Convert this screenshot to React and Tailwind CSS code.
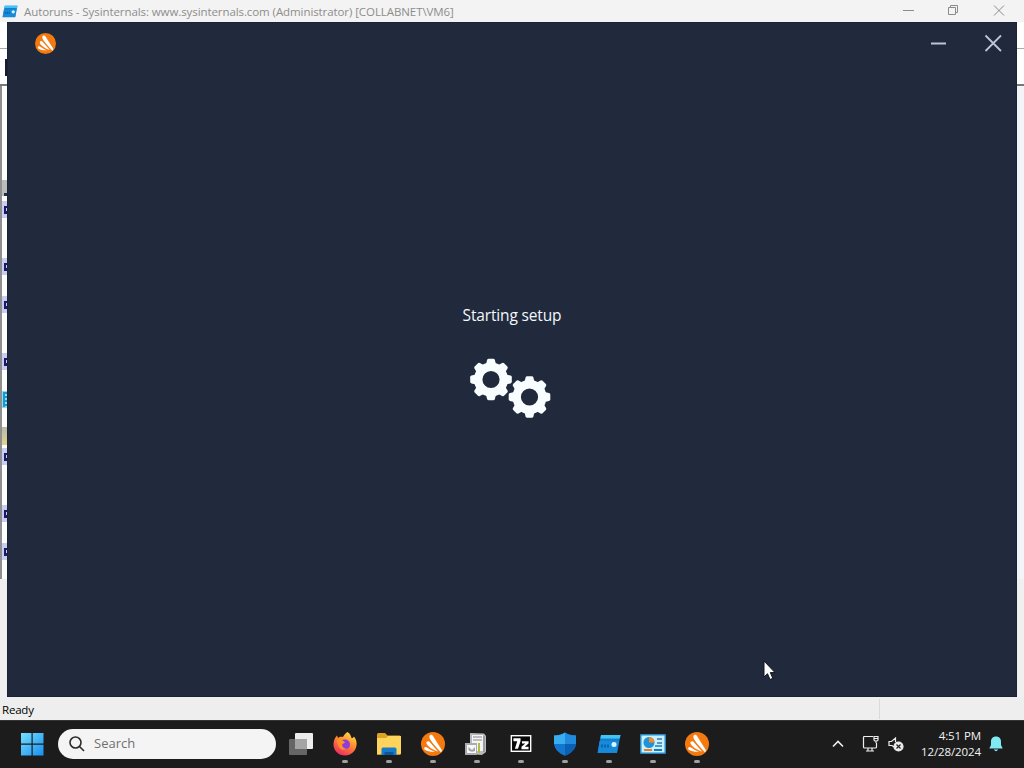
import React from "react";

const ui = "font-['Open_Sans','Noto_Sans',sans-serif]";

function AvastLogo({ className }) {
  return (
    <svg viewBox="0 0 24 24" className={className}>
      <circle cx="12" cy="12" r="12" fill="#f47a10" />
      <path d="M8.400 4.400C8.600 2.600 11 2.200 12 3.900L20.500 17.500C21.200 18.800 20.800 20 19.700 20.100C15.500 15.500 10 9.500 8.700 6.500C8.400 5.700 8.300 5.200 8.400 4.400Z" fill="#fff" />
      <path d="M5.900 9.700C6.800 8.700 8.100 9.100 8.900 10.300L17 19.500C12.500 18 7.500 15 5.900 12.200C5.300 11.200 5.300 10.400 5.900 9.700Z" fill="#fff" />
      <path d="M3.300 15.900C3.700 14.900 5 14.900 6 15.600C8.500 17.400 11 18.800 14 19.700C10.500 20.100 6.500 19.300 4.300 18C3.400 17.400 3 16.800 3.300 15.900Z" fill="#fff" />
    </svg>
  );
}

function AutorunsIcon({ className }) {
  return (
    <svg viewBox="0 0 24 20" className={className}>
      <path d="M4 1h19.500L20 19H0.500Z" fill="#147fce" />
      <path d="M4 1h19.500l-.8 3.500H3.300Z" fill="#40c4f5" />
      <path d="M2.600 7h19.300l-2 11.500H.8Z" fill="#178bd9" />
      <path d="M4 12h8" stroke="#0867b4" strokeWidth="3" strokeDasharray="2 1" />
      <circle cx="17" cy="10.500" r="2.500" fill="#d8f6ff" />
    </svg>
  );
}

function Gear({ x, y }) {
  return (
    <g transform={`translate(${x} ${y})`}>
      <g fill="#f8fdff">
        {[0, 45, 90, 135, 180, 225, 270, 315].map((a) => (
          <path key={a} transform={`rotate(${a})`} d="M-5.300-14L-3.900-19.500Q-3.500-20.800-2.300-20.800H2.300Q3.500-20.800 3.900-19.500L5.300-14Z" />
        ))}
      </g>
      <circle r="12.800" fill="none" stroke="#f8fdff" strokeWidth="8.400" />
    </g>
  );
}

function Firefox() {
  return (
    <svg viewBox="0 0 24 24" className="size-6">
      <defs>
        <linearGradient id="fox" x1=".8" y1="0" x2=".25" y2="1">
          <stop stopColor="#ffe24a" /><stop offset=".45" stopColor="#ff8b2c" /><stop offset="1" stopColor="#ee2568" />
        </linearGradient>
      </defs>
      <path d="M14.500 0C17 1.500 18 4 18.500 6C20 6.200 20.500 5.500 21 4.500C23 7 24 10 23.500 13C23 19 18 23.500 12 23.500C5.500 23.500.5 18.700.5 12.500C.5 9 1.500 6 4 3.500L5 6C6.500 4.500 8.500 4.500 10 5C11 3 12.500 1 14.500 0Z" fill="url(#fox)" />
      <circle cx="12" cy="12.500" r="5" fill="#8c3ddb" />
      <path d="M4 8.500C7 6.500 9 8 11 9.500C13 10.500 11 11.500 9.300 12C8.800 15 11 17 14 16.500C10 19.500 5 17 4 8.500Z" fill="#ff9426" />
    </svg>
  );
}

function Explorer() {
  return (
    <svg viewBox="0 0 26 24" className="h-6 w-[26px]">
      <path d="M1 2.500Q1 1 2.500 1H9L11.500 3.500H23.500Q25 3.500 25 5V21Q25 22.500 23.500 22.500H1Z" fill="#dfa323" />
      <path d="M1 6H10L12 4H25V21Q25 22.500 23.500 22.500H1Z" fill="#ffd45c" />
      <path d="M5.500 23V17Q5.500 15.500 7 15.500H19Q20.500 15.500 20.500 17V23Z" fill="#167cca" />
      <path d="M8.500 23V20H17.500V23Z" fill="#0a579f" />
    </svg>
  );
}

function Tool() {
  return (
    <svg viewBox="0 0 24 24" className="mr-0.5 size-6">
      <path d="M6 1L20 1.500L22 4V20L18 23L6 22Z" fill="#b9b9be" />
      <path d="M8 3H19V19H8Z" fill="#f4f4f4" />
      <path d="M9 5H18M9 8H18M20 4V20" stroke="#888890" strokeWidth="1.200" />
      <path d="M14 11H16V21H14Z" fill="#aebc42" />
      <rect x="1" y="11" width="12" height="12" fill="#aaaab0" />
      <rect x="3" y="13" width="9" height="8" fill="#f8f8f8" />
      <path d="M4.500 15V18Q7 21 11 19V15L8 18Z" fill="#a0a3aa" />
    </svg>
  );
}

function SevenZip() {
  return (
    <svg viewBox="0 0 22 18" className="h-[17px] w-[22px]">
      <rect width="22" height="18" fill="#fff" />
      <rect x="1.500" y="1.500" width="19" height="15" fill="#080808" />
      <path d="M3 3.500H10.500V6.500L7.800 14.500H4.500L7 6.500H3Z" fill="#fff" />
      <path d="M12 6.500H19V9L15 12.500H19V15H11.500V12.500L15.500 9H12Z" fill="#fff" />
    </svg>
  );
}

function Shield() {
  return (
    <svg viewBox="0 0 24 24" className="size-6">
      <path d="M12 .5Q16 3.500 23 3.500V11C23 17 18 21.500 12 23.800C6 21.500 1 17 1 11V3.500Q8 3.500 12 .5Z" fill="#1477cf" />
      <path d="M12 .5Q8 3.500 1 3.500V12H12Z" fill="#38adf0" />
      <path d="M12 .5Q16 3.500 23 3.500V12H12Z" fill="#208bdc" />
      <path d="M12 12H23C22.500 17.500 18 21.500 12 23.800Z" fill="#0c60b3" />
    </svg>
  );
}

function ControlPanel() {
  return (
    <svg viewBox="0 0 26 20" className="h-5 w-[26px]">
      <rect width="26" height="20" rx="1" fill="#2489c5" />
      <rect x="1.500" y="1.500" width="23" height="17" fill="#c9f0fc" />
      <circle cx="9" cy="8.500" r="5.500" fill="#1e92db" />
      <path d="M9 8.500V3A5.500 5.500 0 0 1 14.500 8.500Z" fill="#f38a27" />
      <path d="M17 5H22M17 9H22M15 12H22" stroke="#2a7bb5" strokeWidth="1.500" />
      <path d="M4 16H12" stroke="#e97c25" strokeWidth="2" />
      <path d="M14 16H22" stroke="#157db8" strokeWidth="2" />
    </svg>
  );
}

function TaskView() {
  return (
    <svg viewBox="0 0 25 24" className="mr-0.5 h-6 w-[25px]">
      <rect x="7" y="1" width="18" height="16" rx="1" fill="#eeeeee" />
      <rect x="1" y="7" width="18" height="16" rx="1" fill="#666" />
      <path d="M7 7H19V17H7Z" fill="#a5a5a5" />
    </svg>
  );
}

function TaskItem({ children, idle }) {
  return (
    <div className="relative flex h-12 w-11 shrink-0 items-center justify-center">
      {children}
      {!idle && <span className="absolute bottom-[5px] left-[19px] h-[3px] w-1.5 rounded-full bg-[#a0a0a0]" />}
    </div>
  );
}

function RowIcon({ className }) {
  return (
    <div className={`flex h-[17px] w-[5px] shrink-0 items-center justify-end bg-[#c9cdf0] ${className}`}>
      <svg viewBox="0 0 3 9" className="h-[9px] w-[3px]">
        <path d="M0 1H3V3H2V6H3V9H0Z" fill="#17196c" />
      </svg>
    </div>
  );
}

function BackWindow() {
  return (
    <div className="flex h-[720px] flex-col bg-[#f0f0f0]">
      <header className="flex h-[22px] shrink-0 items-center bg-[#f3f3f3]">
        <AutorunsIcon className="ml-0.5 h-[13px] w-4" />
        <span className="ml-1.5 mt-px whitespace-nowrap text-[11.5px] leading-[20px] tracking-[-0.085px] text-[#8d8d8d]">
          Autoruns - Sysinternals: www.sysinternals.com (Administrator) [COLLABNET\VM6]
        </span>
        <svg viewBox="0 0 110 22" className="ml-auto mr-[14px] h-[22px] w-[110px]" fill="none" stroke="#8b8b8b">
          <path d="M3 10.500H14" />
          <path d="M48.500 7.500H55.500V14.500H48.500ZM50.500 7.500V5.500H57.500V12.500H55.500" />
          <path d="M94 5.500L104 15.500M104 5.500L94 15.500" />
        </svg>
      </header>
      <div className="h-[27px] shrink-0 border-b border-[#aaa] bg-white" />
      <div className="flex h-[35px] shrink-0 items-start bg-white pl-[5px] pt-[10px]">
        <div className="h-[17px] w-2 bg-[#171d2e]" />
      </div>
      <div className="flex h-[495px] shrink-0 border-t-2 border-[#777]">
        <div className="flex w-[7px] flex-col border-l-2 border-[#909090] bg-white">
          <div className="mt-[94px] flex h-[16px] shrink-0 flex-col items-end justify-end bg-[#b9bcb9]">
            <div className="h-[3px] w-[3px] bg-[#20304a]" />
          </div>
          <RowIcon className="mt-[5px]" />
          <RowIcon className="mt-[40px]" />
          <RowIcon className="mt-[21px]" />
          <RowIcon className="mt-[40px]" />
          <div className="mt-[21px] flex h-[17px] shrink-0 justify-end bg-[#93d9f4]">
            <svg viewBox="0 0 4 17" className="h-[17px] w-1">
              <path d="M0 2H4M0 6H4M0 10H4M0 14H4M1 1V16" stroke="#119bd0" strokeWidth="2" />
            </svg>
          </div>
          <div className="mt-[19px] h-[18px] shrink-0 bg-gradient-to-b from-[#b9b9a8] to-[#e2d38d]" />
          <RowIcon className="mt-[3px]" />
          <RowIcon className="mt-[40px]" />
          <RowIcon className="mt-[21px]" />
        </div>
        <div className="ml-auto w-[7px] bg-[#f3f4f8]" />
      </div>
      <footer className="mt-auto flex h-[23px] shrink-0 items-center bg-[#eee] text-[11.5px] text-black">
        <span className="ml-0.5 mt-[3px] tracking-[-0.2px]">Ready</span>
        <div className="ml-auto mr-[144px] h-5 w-px bg-[#dadada]" />
      </footer>
    </div>
  );
}

function SetupWindow() {
  return (
    <main className="absolute left-[7px] top-[22px] flex h-[675px] w-[1010px] flex-col items-center border border-[#1a2335] bg-[#202a3c]">
      <div className="flex h-10 w-full shrink-0 items-center">
        <AvastLogo className="ml-[27px] size-[21px]" />
        <svg viewBox="0 0 72 20" className="ml-auto mr-[14px] h-5 w-[72px]" fill="none" stroke="#bdc6d8" strokeWidth="2">
          <path d="M1 10.500H16" />
          <path d="M55.500 2.500L71 18M71 2.500L55.500 18" strokeWidth="1.800" />
        </svg>
      </div>
      <p className="mt-[241px] whitespace-nowrap text-[15.5px] leading-[22px] tracking-[-0.15px] text-[#f4f7fb]">Starting setup</p>
      <svg viewBox="470 358 82 62" className="mt-[32px] mr-0.5 h-[62px] w-[82px]">
        <Gear x={491} y={379.5} />
        <Gear x={529.5} y={397} />
      </svg>
    </main>
  );
}

function Taskbar() {
  return (
    <nav className="flex h-12 items-center border-t border-[#343434] bg-[#1c1c1c] pb-0.5">
      <svg viewBox="0 0 24 24" className="ml-[20px] size-6 shrink-0">
        <defs>
          <linearGradient id="win" x1="0" y1="0" x2="24" y2="24" gradientUnits="userSpaceOnUse">
            <stop stopColor="#79e4ff" /><stop offset="1" stopColor="#158df0" />
          </linearGradient>
        </defs>
        <path d="M1 1H11.500V11.500H1ZM12.700 1H23.500V11.500H12.700ZM1 12.700H11.500V23.500H1ZM12.700 12.700H23.500V23.500H12.700Z" fill="url(#win)" />
      </svg>
      <div className="ml-[14px] flex h-[30px] w-[218px] shrink-0 items-center rounded-full bg-[#f4f4f4]">
        <svg viewBox="0 0 16 16" className="ml-[11px] size-4" fill="none" stroke="#2b2b2b" strokeWidth="1.600">
          <circle cx="6.500" cy="6.500" r="5.500" />
          <path d="M10.500 10.500L15 15" />
        </svg>
        <span className="ml-[9px] mt-px text-[13px] text-[#707070]">Search</span>
      </div>
      <div className="ml-[3px] flex shrink-0">
        <TaskItem idle><TaskView /></TaskItem>
        <TaskItem><Firefox /></TaskItem>
        <TaskItem><Explorer /></TaskItem>
        <TaskItem><AvastLogo className="size-6" /></TaskItem>
        <TaskItem><Tool /></TaskItem>
        <TaskItem><SevenZip /></TaskItem>
        <TaskItem><Shield /></TaskItem>
        <TaskItem><AutorunsIcon className="h-5 w-6" /></TaskItem>
        <TaskItem><ControlPanel /></TaskItem>
        <TaskItem><AvastLogo className="size-6" /></TaskItem>
      </div>
      <div className="ml-auto mr-[21px] flex items-center">
        <svg viewBox="0 0 12 8" className="mr-[18px] h-2 w-3" fill="none" stroke="#eee" strokeWidth="1.600">
          <path d="M1 6.500L6 1.500L11 6.500" />
        </svg>
        <svg viewBox="0 0 17 17" className="h-[17px] w-[17px]" fill="none" stroke="#eee" strokeWidth="1.200">
          <path d="M11 1.500H2.500Q1.500 1.500 1.500 2.500V12Q1.500 13 2.500 13H13.500Q14.500 13 14.500 12V8M6 13V16M10 13V16M4 16H12" />
          <path d="M12 1.500H16V5Q16 6 14 6T12 5ZM14 6V8M12 3.500H16" />
        </svg>
        <svg viewBox="0 0 16 16" className="ml-[9px] size-4" fill="none" stroke="#eee" strokeWidth="1.200">
          <path d="M6 11L4 9.500H1V5.500H3.500L7.500 2V6" />
          <circle cx="10.500" cy="10.500" r="4.500" fill="#eee" />
          <path d="M8.500 8.500L12.500 12.500M12.500 8.500L8.500 12.500" stroke="#222" />
        </svg>
        <div className="ml-[15px] w-[62px] whitespace-nowrap text-right text-[11.5px] leading-4 tracking-[-0.1px] text-[#f2f2f2]">
          <div>4:51 PM</div>
          <div>12/28/2024</div>
        </div>
        <svg viewBox="0 0 14 16" className="ml-[8px] h-4 w-3.5" fill="#80e9f2">
          <path d="M7 0.500C3.700.5 2 2.800 2 5.500V9L.5 12V12.500H13.500V12L12 9V5.500C12 2.800 10.300.5 7 .5ZM4.800 13.500Q7 17 9.200 13.500Z" />
        </svg>
      </div>
    </nav>
  );
}

export default function App() {
  return (
    <div className={`relative h-[768px] w-[1024px] overflow-hidden ${ui}`}>
      <BackWindow />
      <Taskbar />
      <SetupWindow />
      <svg viewBox="0 0 13 20" className="absolute left-[763px] top-[660px] h-5 w-[13px]">
        <path d="M1 1V17L4.500 13.700L7 19.500L9.800 18.300L7.300 12.600H12Z" fill="#fff" stroke="#111722" strokeWidth="1" />
      </svg>
    </div>
  );
}
